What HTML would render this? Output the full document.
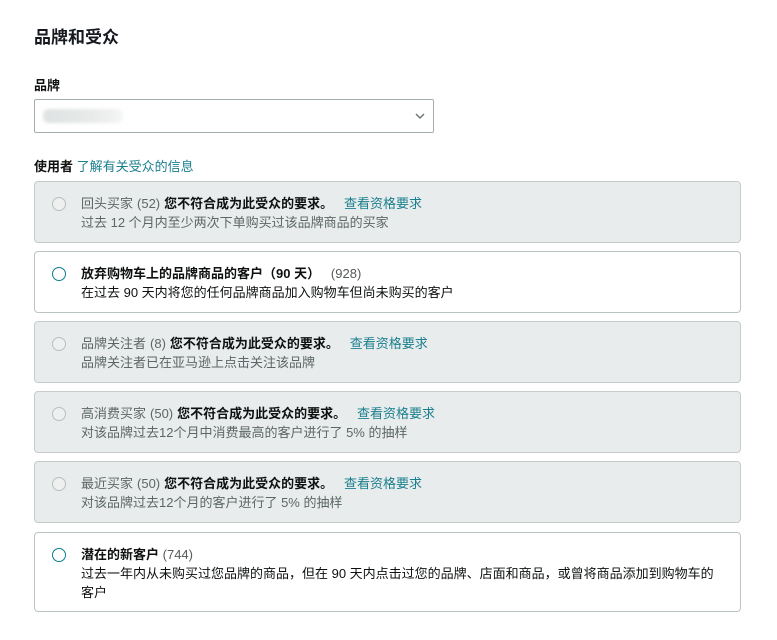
<!DOCTYPE html>
<html><head><meta charset="utf-8"><style>
*{box-sizing:border-box;margin:0;padding:0}
body{width:777px;height:640px;background:#fff;font-family:"Liberation Sans","Noto Sans CJK SC",sans-serif;color:#0f1111;position:relative;overflow:hidden}
.a{position:absolute}
h1{position:absolute;left:34px;top:23px;font-size:17px;font-weight:bold;color:#16191f}
.lbl{left:34px;top:75px;font-size:13px;font-weight:bold}
.sel{left:34px;top:99px;width:400px;height:34px;border:1px solid #a6adad;border-radius:2px}
.blur{position:absolute;left:8px;top:9px;width:80px;height:14px;background:linear-gradient(90deg,#dfe2e2,#e8eaea 60%,#f4f5f5);border-radius:6px;filter:blur(1.5px)}
.use{left:34px;top:156px;font-size:13px}
.use b{font-weight:bold}
.lk{color:#1a7f8e}
.card{position:absolute;left:34px;width:707px;border:1px solid #bcc3c3;border-radius:4px;background:#fff}
.card.d{background:#e9ecec;border-color:#c6cccc}
.r{position:absolute;left:17px;top:15px;width:14px;height:14px;border-radius:50%;border:1.5px solid #0f7c8c;background:#fff}
.d .r{border:1px solid #b8bebe;background:#eef0f0}
.t{position:absolute;left:46px;top:12px;font-size:13px;line-height:19px;right:24px}
.d .t{color:#5c6666}
.t .n{color:#565959}
.t b{color:#0f1111;font-weight:bold}
.c{margin:0 4px}
</style></head><body>
<h1>品牌和受众</h1>
<div class="a lbl">品牌</div>
<div class="a sel"><div class="blur"></div>
<svg class="a" style="left:380px;top:12px" width="10" height="8" viewBox="0 0 10 8"><path d="M1 2 L5 6 L9 2" fill="none" stroke="#6b7373" stroke-width="1.4"/></svg></div>
<div class="a use"><b>使用者</b> <span class="lk">了解有关受众的信息</span></div>

<div class="card d" style="top:181px;height:62px"><div class="r"></div><div class="t">回头买家<span class="c">(52)</span><b>您不符合成为此受众的要求。</b>&nbsp;&nbsp; <span class="lk">查看资格要求</span><br>过去 12 个月内至少两次下单购买过该品牌商品的买家</div></div>

<div class="card" style="top:251px;height:62px"><div class="r"></div><div class="t"><b>放弃购物车上的品牌商品的客户（90 天）</b>&nbsp;&nbsp; <span class="n">(928)</span><br>在过去 90 天内将您的任何品牌商品加入购物车但尚未购买的客户</div></div>

<div class="card d" style="top:321px;height:62px"><div class="r"></div><div class="t">品牌关注者<span class="c">(8)</span><b>您不符合成为此受众的要求。</b>&nbsp;&nbsp; <span class="lk">查看资格要求</span><br>品牌关注者已在亚马逊上点击关注该品牌</div></div>

<div class="card d" style="top:391px;height:62px"><div class="r"></div><div class="t">高消费买家<span class="c">(50)</span><b>您不符合成为此受众的要求。</b>&nbsp;&nbsp; <span class="lk">查看资格要求</span><br>对该品牌过去12个月中消费最高的客户进行了 5% 的抽样</div></div>

<div class="card d" style="top:461px;height:62px"><div class="r"></div><div class="t">最近买家<span class="c">(50)</span><b>您不符合成为此受众的要求。</b>&nbsp;&nbsp; <span class="lk">查看资格要求</span><br>对该品牌过去12个月的客户进行了 5% 的抽样</div></div>

<div class="card" style="top:532px;height:80px"><div class="r"></div><div class="t"><b>潜在的新客户</b> <span class="n">(744)</span><br>过去一年内从未购买过您品牌的商品，但在 90 天内点击过您的品牌、店面和商品，或曾将商品添加到购物车的<br>客户</div></div>
</body></html>
